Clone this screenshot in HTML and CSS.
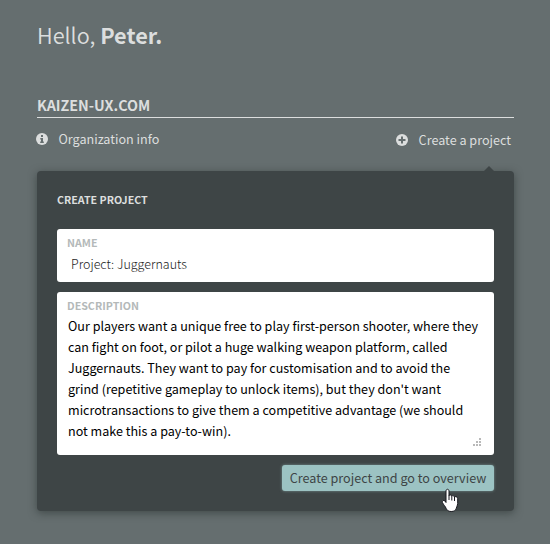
FILE: index.html
```html
<!DOCTYPE html>
<html lang="en">
<head>
    <meta charset="UTF-8">
    <meta name="viewport" content="width=device-width, initial-scale=1.0">
    <title>Create project</title>
    <link rel="stylesheet" href="styles.css">
</head>
<body>
    <div id="main">
        <h1 id="greeting"><span>Hello,</span> <b>Peter.</b></h1>

        <h2 id="organization">KAIZEN-UX.COM</h2>

        <div id="actions">
            <a class="action" id="info">
                <svg class="icon" viewBox="0 0 12 12">
                    <circle cx="6" cy="6" r="6"/>
                    <path class="cut" d="M5 2h2v2H5zM4.300 5H7v3.500h.800V10H4.200V8.500H5V6.400h-.700z"/>
                </svg>
                <span id="info-text">Organization info</span>
            </a>
            <a class="action" id="create">
                <svg class="icon" viewBox="0 0 12 12">
                    <circle cx="6" cy="6" r="6"/>
                    <path class="cut" d="M5 2.500h2V5h2.500v2H7v2.500H5V7H2.500V5H5z"/>
                </svg>
                <span id="create-text">Create a project</span>
            </a>
        </div>

        <form id="panel">
            <h3 id="panel-title">CREATE PROJECT</h3>

            <div class="field" id="field-name">
                <label for="name">NAME</label>
                <input type="text" id="name" value="Project: Juggernauts">
            </div>

            <div class="field" id="field-description">
                <label for="description">DESCRIPTION</label>
                <textarea id="description" spellcheck="false">Our players want a unique free to play first-person shooter, where they can fight on foot, or pilot a huge walking weapon platform, called Juggernauts. They want to pay for customisation and to avoid the grind (repetitive gameplay to unlock items), but they don't want microtransactions to give them a competitive advantage (we should not make this a pay-to-win).</textarea>
                <svg class="grip" viewBox="0 0 8 8">
                    <path d="M6 0h2v2H6zM3 3h2v2H3zM6 3h2v2H6zM0 6h2v2H0zM3 6h2v2H3zM6 6h2v2H6z"/>
                </svg>
            </div>

            <button type="button" id="submit">Create project and go to overview</button>
        </form>

        <svg id="cursor" viewBox="0 0 18 24">
            <path d="M5 2.500C5 .200 8 .200 8 2.500V7c.800-.800 2.600-.600 2.700.500.700-.800 2.600-.400 2.700.900 1-.700 3.300 0 3.300 1.700V15c0 2-1 3-1.500 5-.500 1.700-2 3-5 3-3.500 0-4-1.500-5-3-.800-2-2.500-3.500-3.800-6-.500-2 1.300-2.800 2.600-1.500L5 14z"/>
            <path class="fingers" d="M8 6.500v5M10.800 7.500v4.500M13.500 8.500V12.500"/>
        </svg>
    </div>
</body>
</html>
```

FILE: styles.css
```css
* {
    box-sizing: border-box;
    font-family: "Noto Sans CJK SC", "Noto Sans", sans-serif;
}

body {
    margin: 0;
    height: 544px;
    overflow: hidden;
    background-color: #656e6f;
    color: #dcdede;
}

#main {
    position: relative;
    width: 477px;
    margin-left: 37px;
    padding-top: 19px;
}

#greeting {
    margin: 0;
    font-size: 21.7px;
    line-height: 32px;
    font-weight: 350;
}

#greeting b {
    font-weight: 700;
}

#organization {
    margin: 43px 0 0 0;
    height: 24px;
    border-bottom: 1px solid #dcdede;
    font-size: 14.3px;
    line-height: 21px;
    font-weight: 700;
}

#actions {
    display: flex;
    justify-content: space-between;
    padding-right: 3px;
    font-size: 12.6px;
    line-height: 20px;
}

.action {
    display: flex;
    align-items: center;
    height: 20px;
    margin-top: 11px;
}

#info {
    margin-left: -1px;
}

#create {
    margin-top: 12px;
}

.icon {
    width: 12px;
    height: 12px;
    margin-right: 10.500px;
    fill: #dcdede;
}

.icon .cut {
    fill: #656e6f;
}

#panel {
    position: relative;
    height: 340px;
    margin: 21px 0 0 0;
    padding: 20px;
    border-radius: 4px;
    background-color: #3e4546;
    box-shadow: 0 2px 9px rgba(40, 48, 46, .6);
}

#panel::before {
    content: "";
    position: absolute;
    top: -5px;
    right: 20px;
    border: 5px solid transparent;
    border-top: 0;
    border-bottom-color: #3e4546;
}

#panel-title {
    margin: 0 0 20px 0;
    font-size: 10.7px;
    line-height: 18px;
    font-weight: 700;
}

.field {
    position: relative;
    margin-bottom: 10px;
    padding: 5px 10px 0 10px;
    border-radius: 3px;
    background-color: #fff;
}

#field-name {
    height: 53px;
}

#field-description {
    height: 163px;
}

.field label {
    display: block;
    color: #b4b9b9;
    font-size: 10.7px;
    line-height: 18px;
    font-weight: 700;
}

.field input, .field textarea {
    display: block;
    margin: 0;
    border: 0;
    outline: 0;
    background: none;
}

.field input {
    width: 100%;
    height: 24px;
    margin-top: -1px;
    padding: 0 4px;
    color: #222;
    font-size: 12.5px;
    font-weight: 300;
}

.field textarea {
    width: 414px;
    height: 130px;
    padding: 0 1px;
    overflow: hidden;
    resize: none;
    color: #000;
    font-size: 12.57px;
    line-height: 21px;
}

.grip {
    position: absolute;
    right: 13px;
    bottom: 9px;
    width: 8px;
    height: 8px;
    fill: #b9b9b9;
}

#submit {
    display: block;
    width: 212px;
    height: 26px;
    margin-left: auto;
    padding: 0;
    border: 0;
    border-radius: 3px;
    background-color: #9cc3c3;
    box-shadow: 0 0 3px rgba(156, 195, 195, .6);
    color: #3e4546;
    font-size: 12.6px;
    line-height: 26px;
}

#cursor {
    position: absolute;
    left: 404px;
    top: 488px;
    width: 18px;
    height: 25px;
    fill: #fff;
    stroke: #17181f;
    stroke-width: 1;
}

#cursor .fingers {
    fill: none;
}
```
